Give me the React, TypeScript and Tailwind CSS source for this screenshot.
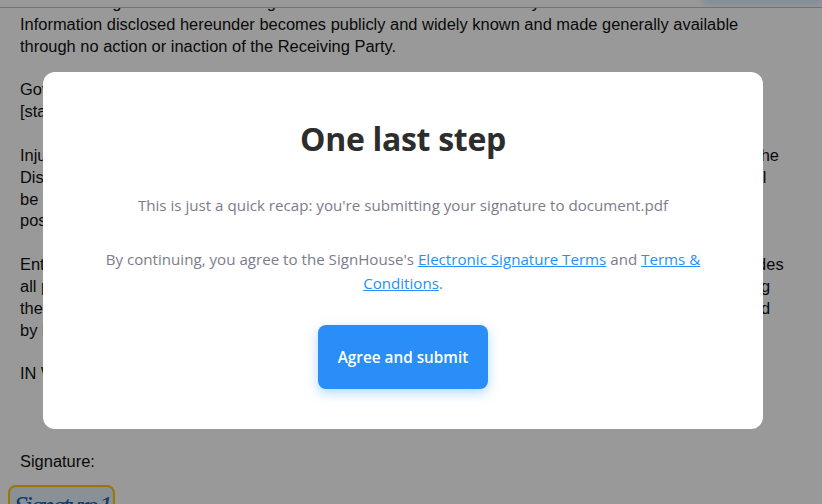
const bodyFont = "font-['Liberation_Sans',Arial,sans-serif]";

const paragraphs = [
  ["That following its release is no longer a secret and the other holder only held the", "Information disclosed hereunder becomes publicly and widely known and made generally available", "through no action or inaction of the Receiving Party."],
  ["Governing Law. This Agreement shall be governed by and construed in accordance with the laws of", "[state or country], without regard to its conflict of laws principles."],
  [
    "Injunctive Relief. The Receiving Party acknowledges that a breach of this Agreement may well cause the",
    "Disclosing Party irreparable harms for which monetary damages would be inadequate, and thus it shall",
    "be entitled to seek injunctive relief in addition to any other remedies available at law or in equity,",
    "possibly without the requirement of posting a bond.",
  ],
  [
    "Entire Agreement. This Agreement constitutes the entire understanding of the parties hereto and includes",
    "all prior discussions and understandings as to its subject matter, whether oral or in written form, relating",
    "the Confidential Information. It can not be amended except by way of a written instrument that is signed",
    "by law.",
  ],
  ["IN WITNESS WHEREOF, the parties have executed this Agreement as of the date written above."],
];

export default function App() {
  return (
    <div className={`relative h-[504px] w-full overflow-hidden bg-white text-[#111] ${bodyFont}`}>
      <header className="relative z-10 h-2 overflow-hidden border-b border-[#c0c0c0] bg-white">
        <div className="absolute -top-2 right-0 h-3 w-[120px] bg-[#cfe6fb] blur-[4px]" />
      </header>
      <main className="-mt-[16px] h-[512px] overflow-hidden pl-5 pr-[30px] text-[16.45px] leading-[21.85px]">
        {paragraphs.map((lines, i) => (
          <p key={i} className="mb-[21.85px] whitespace-nowrap">
            {lines.map((line) => (
              <span key={line} className="block">
                {line}
              </span>
            ))}
          </p>
        ))}
        <div className="h-[43.7px]" />
        <p>Signature:</p>
        <div className="-ml-3 mt-[12px] h-[60px] w-[107px] overflow-hidden whitespace-nowrap rounded-lg border-2 border-[#ffc800] bg-[#e4f1fb] px-1 pt-1 font-['Liberation_Serif',serif] text-[28px] italic leading-[30px] tracking-[-3px] text-[#1d5fb4]">
          Signature 1
        </div>
      </main>

      <div className="absolute inset-0 z-20 flex items-start justify-center bg-black/40 pr-4 pt-[72px]">
        <section className="flex h-[357px] w-[720px] flex-col items-center rounded-xl bg-white px-[60px] pt-[43px] text-center font-['Open_Sans','Noto_Sans',sans-serif]">
          <h1 className="text-[32px] font-bold leading-[48px] tracking-[-0.3px] text-[#2d2d2d]">One last step</h1>
          <p className="mt-[30px] text-[15.13px] leading-6 text-[#7c7c8a]">
            This is just a quick recap: you're submitting your signature to document.pdf
          </p>
          <p className="mt-[30px] text-[15.13px] leading-6 text-[#7c7c8a]">
            By continuing, you agree to the SignHouse's{" "}
            <a href="#" className="text-[#2490fb] underline">Electronic Signature Terms</a> and{" "}
            <a href="#" className="text-[#2490fb] underline">Terms &amp; Conditions</a>.
          </p>
          <button className="mt-[30px] h-16 w-[170px] rounded-lg bg-[#2a8ef8] text-[15.3px] font-semibold text-white shadow-[0_4px_12px_rgba(36,144,251,0.35)]">
            Agree and submit
          </button>
        </section>
      </div>
    </div>
  );
}
